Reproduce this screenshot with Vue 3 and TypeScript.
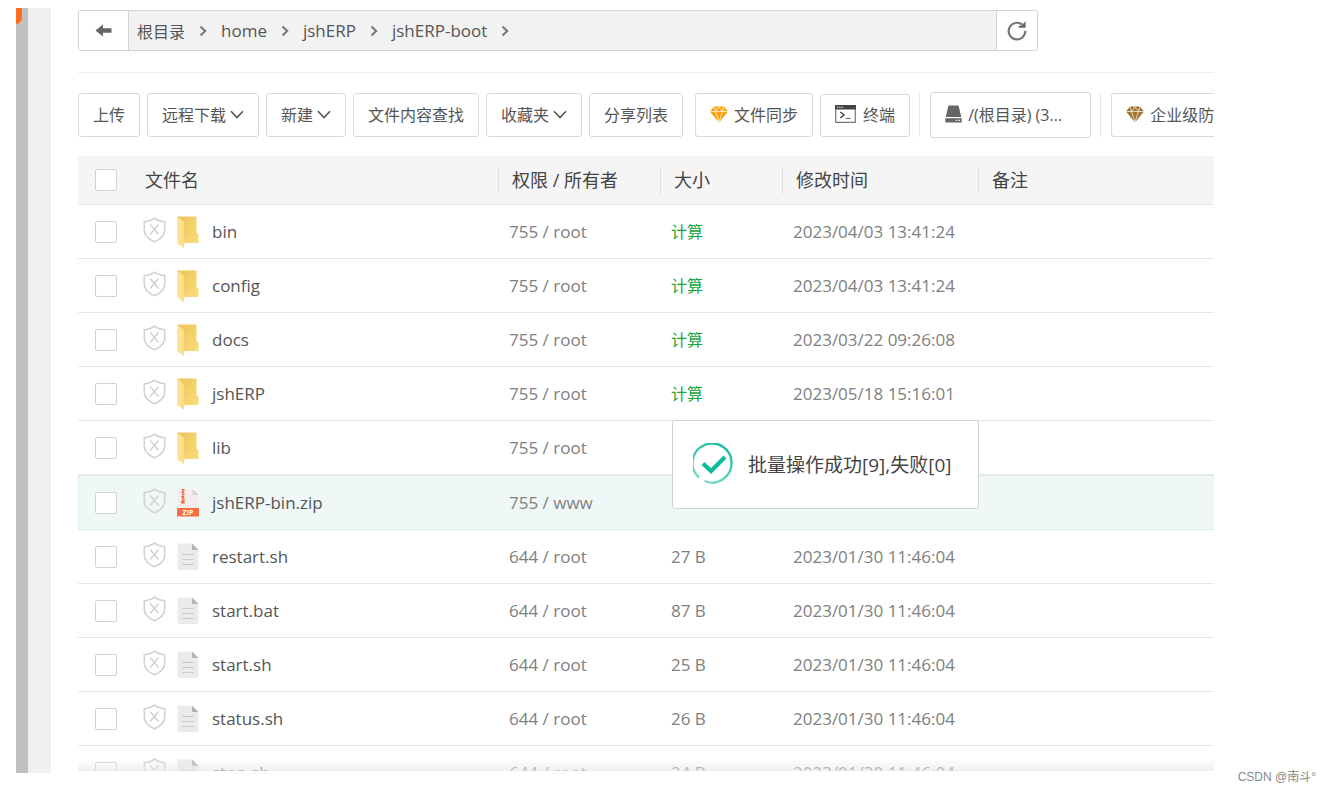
<script setup lang="ts">
import { ref } from 'vue'

type Kind = 'folder' | 'zip' | 'text'

interface FileRow {
  name: string
  kind: Kind
  perm: string
  size: string
  time: string
  selected?: boolean
}

const crumbs: string[] = ['根目录', 'home', 'jshERP', 'jshERP-boot']

const files: FileRow[] = [
  { name: 'bin', kind: 'folder', perm: '755 / root', size: '计算', time: '2023/04/03 13:41:24' },
  { name: 'config', kind: 'folder', perm: '755 / root', size: '计算', time: '2023/04/03 13:41:24' },
  { name: 'docs', kind: 'folder', perm: '755 / root', size: '计算', time: '2023/03/22 09:26:08' },
  { name: 'jshERP', kind: 'folder', perm: '755 / root', size: '计算', time: '2023/05/18 15:16:01' },
  { name: 'lib', kind: 'folder', perm: '755 / root', size: '', time: '' },
  { name: 'jshERP-bin.zip', kind: 'zip', perm: '755 / www', size: '', time: '2023/05/18 15:16:01', selected: true },
  { name: 'restart.sh', kind: 'text', perm: '644 / root', size: '27 B', time: '2023/01/30 11:46:04' },
  { name: 'start.bat', kind: 'text', perm: '644 / root', size: '87 B', time: '2023/01/30 11:46:04' },
  { name: 'start.sh', kind: 'text', perm: '644 / root', size: '25 B', time: '2023/01/30 11:46:04' },
  { name: 'status.sh', kind: 'text', perm: '644 / root', size: '26 B', time: '2023/01/30 11:46:04' },
  { name: 'stop.sh', kind: 'text', perm: '644 / root', size: '24 B', time: '2023/01/30 11:46:04' },
]

const checked = ref<string[]>([])
const allChecked = ref(false)
</script>

<template>
  <div class="page">
    <div class="rail"><span class="tab"></span></div>

    <main class="panel">
      <div class="path">
        <button class="back" type="button" aria-label="返回">
          <svg width="18" height="14" viewBox="0 0 18 14"><path d="M.5 6.500 8 .5v3.700h8.500v4.600H8v3.700z" fill="#666" /></svg>
        </button>
        <nav class="crumbs">
          <template v-for="c in crumbs" :key="c">
            <a href="#">{{ c }}</a>
            <svg width="8" height="12" viewBox="0 0 8 12"><path d="M1.500 1.500 6.200 6 1.500 10.500" fill="none" stroke="#777" stroke-width="2" /></svg>
          </template>
        </nav>
        <button class="refresh" type="button" aria-label="刷新">
          <svg width="22" height="22" viewBox="0 0 22 22">
            <path d="M16.300 4.700A8.300 8.300 0 1 0 19.300 11" fill="none" stroke="#777" stroke-width="2.200" />
            <path d="M19.600 1.200v6.600h-6.900V6l3-.5 2-2.200z" fill="#666" />
          </svg>
        </button>
      </div>

      <div class="tools">
        <button type="button">上传</button>
        <button type="button">远程下载<svg class="chev" width="14" height="9" viewBox="0 0 14 9"><path d="M1 1.200 7 7.500 13 1.200" /></svg></button>
        <button type="button">新建<svg class="chev" width="14" height="9" viewBox="0 0 14 9"><path d="M1 1.200 7 7.500 13 1.200" /></svg></button>
        <button type="button">文件内容查找</button>
        <button type="button">收藏夹<svg class="chev" width="14" height="9" viewBox="0 0 14 9"><path d="M1 1.200 7 7.500 13 1.200" /></svg></button>
        <button type="button">分享列表</button>
        <button type="button" class="sync">
          <svg class="gem" width="18" height="17" viewBox="0 0 18 17">
            <path d="M4 .5h10L18 5.500 9 16.500 0 5.500z" fill="#fca10c" />
            <path d="M0 5.500h18M4 .5l1.500 5L9 16l3.500-10.500L14 .5M5.500 5.500 9 1l3.500 4.500" fill="none" stroke="#fff" stroke-width=".7" />
          </svg>文件同步
        </button>
        <button type="button" class="term">
          <svg width="21" height="18" viewBox="0 0 21 18">
            <path d="M.7.700h19.600v16.600H.7z" fill="#fff" stroke="#777" stroke-width="1.200" />
            <path d="M0 0h21v4.500H0z" fill="#444" />
            <path d="M2 2.200h1.300M4.300 2.200h1.300M6.600 2.200h1.300" stroke="#fff" stroke-width="1.100" />
            <path d="m5.300 7 3.700 3-3.700 3" fill="none" stroke="#444" stroke-width="1.400" />
            <path d="M10.500 13.500h5" stroke="#777" stroke-width="1.200" />
          </svg>终端
        </button>
        <span class="bar"></span>
        <button type="button" class="disk">
          <svg width="17" height="18" viewBox="0 0 17 18">
            <path d="M3.500.5h10L16.300 12H.7z" fill="#666" />
            <path d="M.3 13.200h16.400v4.300H.3z" fill="#666" />
            <path d="M10.800 15.300h1.400M13.500 15.300h1.400" stroke="#fff" stroke-width="1.200" />
          </svg>/(根目录) (3...
        </button>
        <span class="bar"></span>
        <button type="button">
          <svg class="gem" width="18" height="17" viewBox="0 0 18 17">
            <path d="M4 .5h10L18 5.500 9 16.500 0 5.500z" fill="#a0752c" />
            <path d="M0 5.500h18M4 .5l1.500 5L9 16l3.500-10.500L14 .5M5.500 5.500 9 1l3.500 4.500" fill="none" stroke="#fff" stroke-width=".7" />
          </svg>企业级防
        </button>
      </div>

      <table>
        <colgroup>
          <col class="c-check" /><col class="c-name" /><col class="c-perm" /><col class="c-size" /><col class="c-time" /><col />
        </colgroup>
        <thead>
          <tr>
            <th class="check"><input v-model="allChecked" type="checkbox" aria-label="全选" /></th>
            <th class="first">文件名</th>
            <th><span>权限 / 所有者</span></th>
            <th><span>大小</span></th>
            <th><span>修改时间</span></th>
            <th><span>备注</span></th>
          </tr>
        </thead>
        <tbody>
          <tr v-for="f in files" :key="f.name" :class="{ selected: f.selected }">
            <td class="check"><input v-model="checked" type="checkbox" :value="f.name" :aria-label="f.name" /></td>
            <td class="name">
              <div class="file">
                <svg class="shield" width="23" height="26" viewBox="0 0 23 26">
                  <path d="M11.500 1.200C8.500 3.600 5 4.500 1.300 4.700v8.500c0 5.500 4.200 9 10.200 11.500 6-2.500 10.200-6 10.200-11.500V4.700C18 4.500 14.500 3.600 11.500 1.200z" fill="none" stroke="#d2d2d2" stroke-width="1.600" />
                  <path d="m7.200 7.500 8.400 10M15.600 7.500l-8.400 10" stroke="#d0d0d0" stroke-width="1.400" />
                </svg>
                <svg v-if="f.kind === 'folder'" width="22" height="32" viewBox="0 0 22 32">
                  <defs>
                    <linearGradient id="foldBack" x1="0" x2="1" y1="0" y2="1"><stop offset="0" stop-color="#edc558" /><stop offset="1" stop-color="#fadb7c" /></linearGradient>
                    <linearGradient id="foldFront" x1="0" x2="1" y1="0" y2="0"><stop offset="0" stop-color="#ffe596" /><stop offset="1" stop-color="#fbdc83" /></linearGradient>
                  </defs>
                  <path d="M0 .5h19.500v16.500l2 1.500v8.500H5z" fill="url(#foldBack)" />
                  <path d="M0 .5 7 6v26L0 27z" fill="url(#foldFront)" />
                </svg>
                <svg v-else-if="f.kind === 'zip'" width="22" height="28" viewBox="0 0 22 28">
                  <path d="M.5 0h15L21.500 6v14H.5z" fill="#f3eeec" />
                  <path d="M15.500 0 21.500 6h-6z" fill="#d8d4cf" />
                  <path d="M7.500.8H5M4.500 3.200h2.600M7.500 5.600H5M4.500 8h2.600M7.500 10.400H5" stroke="#f2683c" stroke-width="1.900" />
                  <path d="M4.200 11.500h3.500v3H4.200z" fill="#f2683c" />
                  <path d="M0 19h22v8.500H0z" fill="#f56f42" />
                  <text x="11" y="26" text-anchor="middle" class="ziptext">ZIP</text>
                </svg>
                <svg v-else width="22" height="28" viewBox="0 0 22 28">
                  <path d="M2 .5h13L21.500 7v18.500a1.500 1.500 0 0 1-1.500 1.500H2A1.500 1.500 0 0 1 .5 25.500V2A1.500 1.500 0 0 1 2 .5z" fill="#ebebeb" />
                  <path d="M15 .5 21.500 7H15z" fill="#b4b4b4" />
                  <path d="M5 11.500h12M5 16.500h12M5 21.500h12" stroke="#cacaca" stroke-width="1.200" />
                </svg>
                <a href="#">{{ f.name }}</a>
              </div>
            </td>
            <td>{{ f.perm }}</td>
            <td><a v-if="f.kind === 'folder' && f.size" class="calc" href="#">{{ f.size }}</a><template v-else>{{ f.size }}</template></td>
            <td>{{ f.time }}</td>
            <td></td>
          </tr>
        </tbody>
      </table>

      <div class="fade"></div>

      <div class="toast" role="status">
        <svg width="42" height="42" viewBox="0 0 42 42">
          <defs>
            <linearGradient id="ring" x1=".7" x2=".3" y1="0" y2="1"><stop offset="0" stop-color="#16bda0" /><stop offset="1" stop-color="#7cdccb" /></linearGradient>
          </defs>
          <path d="M6 34.500A19.500 19.500 0 1 1 11.500 38" fill="none" stroke="url(#ring)" stroke-width="2.400" />
          <path d="m10 20.500 8 7.500L32 14" fill="none" stroke="#0fba9e" stroke-width="4.200" />
        </svg>
        <span>批量操作成功[9],失败[0]</span>
      </div>
    </main>

    <footer class="credit">CSDN @南斗°</footer>
  </div>
</template>

<style>
body {
  margin: 0;
  background: #fff;
}
</style>

<style scoped>
.page {
  display: flex;
  gap: 27px;
  height: 100vh;
  box-sizing: border-box;
  padding: 8px 117px 19px 16px;
  overflow: hidden;
  position: relative;
  font-family: "Open Sans", "Noto Sans CJK SC", sans-serif;
  font-size: 16px;
  color: #555;
}
svg {
  flex: none;
  display: block;
}
a {
  color: inherit;
  text-decoration: none;
}
button {
  font: inherit;
  color: #555;
  background: #fff;
  cursor: pointer;
}
.rail {
  flex: none;
  width: 23px;
  border-left: 12px solid #c1c1c1;
  background: #f0f0f0;
  position: relative;
}
.tab {
  position: absolute;
  left: -12px;
  top: 0;
  width: 6px;
  height: 16px;
  border-bottom-right-radius: 6px;
  background: #ff6d22;
}
.panel {
  flex: 1;
  min-width: 0;
  position: relative;
  overflow: hidden;
  margin-bottom: 2px;
}
.path {
  display: flex;
  width: 84.5%;
  height: 41px;
  box-sizing: border-box;
  margin-top: 2px;
  border: 1px solid #d3d3d3;
  border-radius: 3px;
  background: #f2f2f2;
  overflow: hidden;
}
.path button {
  display: flex;
  align-items: center;
  justify-content: center;
  border: 0 solid #d3d3d3;
  padding: 0;
}
.path .back {
  width: 50px;
  border-right-width: 1px;
}
.path .refresh {
  width: 41px;
  border-left-width: 1px;
}
.crumbs {
  flex: 1;
  display: flex;
  align-items: center;
  gap: 14px;
  padding-left: 8px;
  font-size: 17px;
}
.crumbs a:first-child {
  font-size: 16px;
}
.tools {
  display: flex;
  align-items: center;
  gap: 7px;
  margin-top: 21px;
  padding-top: 19px;
  border-top: 1px solid #eee;
  white-space: nowrap;
}
.tools button {
  flex: none;
  display: flex;
  align-items: center;
  height: 44px;
  padding: 0 14px 2px;
  border: 1px solid #d9d9d9;
  border-radius: 3px;
}
.chev {
  margin-left: 4px;
  fill: none;
  stroke: #555;
  stroke-width: 1.6;
}
.gem {
  margin-right: 6px;
}
.tools .sync {
  margin-left: 5px;
}
.tools .term {
  height: 43px;
}
.term svg {
  margin-right: 7px;
}
.bar {
  flex: none;
  width: 1px;
  height: 44px;
  margin: 0 3px 0 2px;
  background: #e8e8e8;
}
.tools .disk {
  width: 161px;
  height: 46px;
}
.disk svg {
  margin-right: 6px;
}
table {
  width: 100%;
  margin-top: 18px;
  table-layout: fixed;
  border-collapse: separate;
  border-spacing: 0;
}
.c-check {
  width: 56px;
}
.c-name {
  width: 364px;
}
.c-perm {
  width: 162px;
}
.c-size {
  width: 122px;
}
.c-time {
  width: 196px;
}
th {
  height: 48px;
  padding: 0;
  border-bottom: 1px solid #e6e6e6;
  background: #f5f5f5;
  color: #444;
  font-size: 18px;
  line-height: 27px;
  font-weight: 400;
  text-align: left;
}
th span {
  display: block;
  height: 27px;
  padding-left: 13px;
  border-left: 1px solid #e0e0e0;
}
th.first {
  padding-left: 11px;
}
td {
  height: 53px;
  padding: 0 0 0 11px;
  border-bottom: 1px solid #e6e6e6;
  color: #808080;
  font-size: 17px;
  line-height: 24px;
  white-space: nowrap;
}
th.check,
td.check {
  padding-left: 17px;
}
td.name {
  padding-left: 9px;
}
input[type="checkbox"] {
  appearance: none;
  display: block;
  width: 22px;
  height: 22px;
  margin: 0;
  border: 1px solid #d2d2d2;
  border-radius: 2px;
  background: #fff;
}
.file {
  display: flex;
  align-items: center;
  gap: 11px;
  color: #555;
}
.file a {
  padding-left: 2px;
}
.shield {
  margin-bottom: 3px;
}
.ziptext {
  font: 700 7px "Open Sans", sans-serif;
  fill: #fff;
}
.calc {
  color: #20a53a;
  font-size: 16px;
}
.selected td {
  background: #eff8f7;
  border-top: 1px solid #dff0ea;
  border-bottom-color: #dff0ea;
}
.selected td:first-child {
  box-shadow: inset 1px 0 #dff0ea;
}
.fade {
  position: absolute;
  left: 0;
  right: 0;
  bottom: 0;
  height: 12px;
  background: linear-gradient(rgba(235, 235, 235, 0), rgba(232, 232, 232, 0.7));
}
.toast {
  position: absolute;
  left: 594px;
  top: 412px;
  display: flex;
  align-items: center;
  gap: 13px;
  height: 85px;
  padding: 0 26px 2px 20px;
  border: 1px solid #d3d3d3;
  border-radius: 3px;
  background: #fff;
  color: #444;
  font-size: 19px;
  white-space: nowrap;
}
.credit {
  position: absolute;
  right: 15px;
  bottom: 6px;
  color: #888;
  font: 12px/18px "Liberation Sans", "Noto Sans CJK SC", sans-serif;
}
</style>
